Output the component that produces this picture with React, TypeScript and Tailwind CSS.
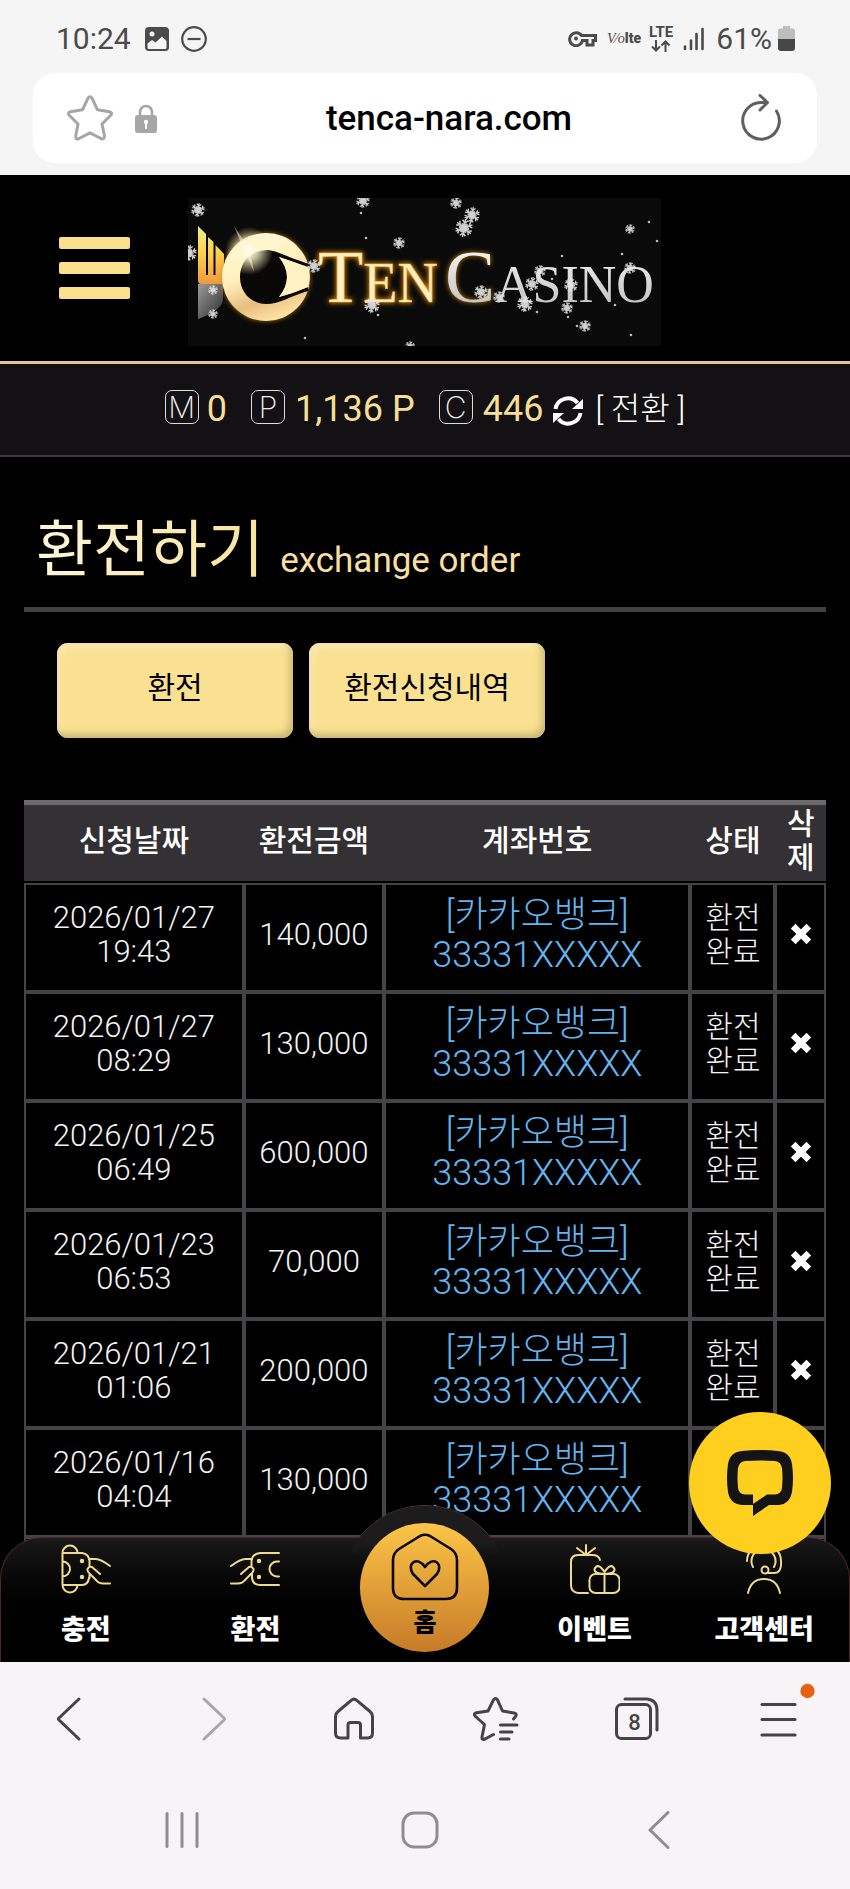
import type { ReactNode } from 'react';

const ORDERS = [
  { date: '2026/01/27', time: '19:43', amount: '140,000' },
  { date: '2026/01/27', time: '08:29', amount: '130,000' },
  { date: '2026/01/25', time: '06:49', amount: '600,000' },
  { date: '2026/01/23', time: '06:53', amount: '70,000' },
  { date: '2026/01/21', time: '01:06', amount: '200,000' },
  { date: '2026/01/16', time: '04:04', amount: '130,000' },
];

// x, y, radius
const FLAKES = [
  [198, 210, 7], [189, 253, 8], [363, 201, 7], [399, 243, 6], [314, 266, 7], [372, 305, 8],
  [213, 290, 5], [213, 314, 5], [456, 203, 6], [472, 215, 8], [464, 228, 9], [630, 229, 5],
  [481, 292, 7], [499, 297, 6], [540, 271, 6], [532, 284, 7], [525, 304, 8], [571, 285, 7],
  [567, 308, 6], [585, 326, 6], [630, 268, 6], [410, 346, 5],
];

const SPECKS = [
  [649, 222], [657, 241], [562, 256], [622, 254], [552, 279], [568, 317], [577, 326],
  [631, 335], [305, 338], [361, 213], [366, 238], [537, 312], [615, 305], [378, 315],
];

function Snowflake({ x, y, r }: { x: number; y: number; r: number }) {
  return (
    <g transform={`translate(${x} ${y}) scale(${r / 8})`} stroke="#e4e4e4" strokeWidth="1.3" opacity="0.9">
      <circle r="3" fill="#f4f4f4" stroke="none" />
      {[0, 60, 120, 180, 240, 300].map((a) => (
        <path key={a} transform={`rotate(${a + 10})`} d="M0 0V-8M-2.500 -7L0 -4.500L2.500 -7M-2 -4L0 -2L2 -4" fill="none" />
      ))}
    </g>
  );
}

function Logo() {
  return (
    <svg viewBox="188 198 473 148" className="mt-2 w-[473px]" role="img" aria-label="Ten Casino">
      <defs>
        <linearGradient id="wing" x1="0" y1="0" x2="0" y2="1">
          <stop offset="0" stopColor="#e8f08a" />
          <stop offset="0.45" stopColor="#ffd34d" />
          <stop offset="1" stopColor="#f09a3e" />
        </linearGradient>
        <linearGradient id="ring" x1="0.2" y1="0" x2="0.6" y2="1">
          <stop offset="0" stopColor="#fffbe0" />
          <stop offset="0.45" stopColor="#fff0bd" />
          <stop offset="0.75" stopColor="#e9bd80" />
          <stop offset="1" stopColor="#ffe6a6" />
        </linearGradient>
        <linearGradient id="stone" x1="0" y1="0" x2="1" y2="1">
          <stop offset="0" stopColor="#9c9c9c" />
          <stop offset="1" stopColor="#2c2c2c" />
        </linearGradient>
        <linearGradient id="silver" x1="0" y1="0" x2="0" y2="1">
          <stop offset="0" stopColor="#ffffff" />
          <stop offset="1" stopColor="#b9b9b9" />
        </linearGradient>
        <radialGradient id="flare">
          <stop offset="0" stopColor="#ffffff" />
          <stop offset="0.35" stopColor="#fff6cf" stopOpacity="0.8" />
          <stop offset="1" stopColor="#fff0b0" stopOpacity="0" />
        </radialGradient>
        <filter id="glow" x="-20%" y="-20%" width="140%" height="140%">
          <feGaussianBlur stdDeviation="2.5" />
        </filter>
      </defs>
      <rect x="188" y="198" width="473" height="148" fill="#0a0a0a" />
      <path d="M198 226L206 234V275H198ZM208 237L213.500 242V275H208ZM215.500 245L224 254V284H201Q198 284 198 280V275H215.500Z" fill="url(#wing)" />
      <path d="M198 284H223V300Q221 311 198 319Z" fill="url(#stone)" />
      <circle cx="266" cy="277" r="44" fill="#c98a1e" opacity="0.8" filter="url(#glow)" />
      <circle cx="266" cy="277" r="44" fill="url(#ring)" />
      <path d="M266 250C276 250 284 256 309 264V268Q294 262 279 257Q295 277 279 297Q294 293 308 287V291C290 296 280 304 266 304C251 304 240 292 240 277S251 250 266 250Z" fill="#0a0806" />
      <path d="M279 257Q294 262 308 267Q311 277 308 287Q294 293 279 297Q295 277 279 257Z" fill="#fff3c4" />
      <circle cx="249" cy="251" r="24" fill="url(#flare)" />
      <path d="M234 226L250 250L254 272L244 250ZM224 262L250 246L280 248L250 253Z" fill="#fff8d8" opacity="0.5" />
      <g fontFamily="'Liberation Serif', serif">
        <text x="318" y="302" fontSize="74" fill="#d98a10" stroke="#d98a10" strokeWidth="2" filter="url(#glow)">
          T<tspan fontSize="56">EN</tspan>
        </text>
        <text x="318" y="302" fontSize="74" fill="#fff0c4" stroke="#f3b455" strokeWidth="0.7">
          T<tspan fontSize="56">EN</tspan>
        </text>
        <text x="445" y="302" fontSize="75" fill="#d98a10" filter="url(#glow)">C</text>
        <text x="445" y="302" fontSize="75" fill="url(#silver)">C<tspan fontSize="52">ASINO</tspan></text>
      </g>
      {SPECKS.map(([x, y]) => (
        <circle key={`${x}-${y}`} cx={x} cy={y} r="1.300" fill="#b8b8b8" />
      ))}
      {FLAKES.map(([x, y, r]) => (
        <Snowflake key={`${x}-${y}`} x={x} y={y} r={r} />
      ))}
    </svg>
  );
}

function StatusBar() {
  return (
    <div className="flex h-[73px] items-center justify-between pt-1 pr-[55px] pl-14 text-[30px] text-[#4b4b4b]">
      <div className="flex items-center gap-3">
        <span className="mr-0.5">10:24</span>
        <svg viewBox="0 0 24 24" className="size-6">
          <rect width="24" height="24" rx="4" fill="#4b4b4b" />
          <circle cx="7" cy="7" r="2.500" fill="#f5f5f5" />
          <path d="M2.500 16.500L7 13L10.500 15.500L17 9.500L21.500 14V20.500Q21.500 22 20 22H4Q2.500 22 2.500 20.500Z" fill="#f5f5f5" />
        </svg>
        <svg viewBox="0 0 26 26" className="size-[26px]" fill="none" stroke="#4b4b4b" strokeWidth="2.200">
          <circle cx="13" cy="13" r="11.800" />
          <path d="M6.500 13H19.500" />
        </svg>
      </div>
      <div className="flex items-center">
        <svg viewBox="0 0 29 17" className="mr-2.5 w-[29px]" fill="none" stroke="#4b4b4b" strokeWidth="3">
          <path d="M13.500 5.500H27.500V10.500H25V15H19V10.500H14.500A6.500 6.500 0 1 1 13.500 5.500Z" />
          <circle cx="8" cy="8.500" r="2" fill="#4b4b4b" stroke="none" />
        </svg>
        <span className="mr-2 flex items-baseline text-[14px] leading-none">
          <i className="font-['Liberation_Serif',serif]">V⁄o</i>
          <b className="text-[14px] font-black">lte</b>
        </span>
        <span className="mr-2.5 flex flex-col items-center">
          <span className="text-[15px] leading-3 font-bold">LTE</span>
          <svg viewBox="0 0 20 12" className="mt-0.5 w-5" fill="none" stroke="#4b4b4b" strokeWidth="2">
            <path d="M5 0V10.500M1 6.500L5 10.500L9 6.500M14.500 12V1.500M10.500 5.500L14.500 1.500L18.500 5.500" />
          </svg>
        </span>
        <svg viewBox="0 0 21 24" className="mr-3 w-[21px]" stroke="#4b4b4b" strokeWidth="2.600" strokeLinecap="round">
          <path d="M2 19.500V22M8 13.500V22M13.500 7V22M19.500 2V22" />
        </svg>
        <span className="mr-1.5">61%</span>
        <svg viewBox="0 0 17 25" className="w-[17px]">
          <path d="M5 0H12V2.500H14.500Q17 2.500 17 5V13H0V5Q0 2.500 2.500 2.500H5Z" fill="#bdbdbd" />
          <path d="M0 13H17V22Q17 25 14 25H3Q0 25 0 22Z" fill="#474747" />
        </svg>
      </div>
    </div>
  );
}

function AddressBar() {
  return (
    <div className="mx-[33px] mb-3 flex h-[90px] items-center justify-between rounded-[22px] bg-white pr-[36px] pl-[34px]">
      <div className="flex w-[90px] items-center justify-between">
        <button type="button" aria-label="Bookmark">
          <svg viewBox="0 0 46 46" className="size-[46px]" fill="none" stroke="#a6a6a6" strokeWidth="3" strokeLinejoin="round">
            <path d="M20.800 3.500Q23 0 25.200 3.500L30.500 14.800L42.500 16.800Q46 17.800 43.500 20.500L35 29L37.500 41Q37.500 45 34 43.500L23 37.800L12 43.500Q8.500 45 8.700 41L11 29L2.500 20.500Q0 17.800 3.500 16.800L15.500 14.800Z" />
          </svg>
        </button>
        <svg viewBox="0 0 22 29" className="w-[22px]">
          <path d="M5 12V8A6 6 0 0 1 17 8V12" fill="none" stroke="#a6a6a6" strokeWidth="2.600" />
          <rect y="11" width="22" height="18" rx="3" fill="#a6a6a6" />
          <circle cx="11" cy="18" r="2.200" fill="#fff" />
          <rect x="10" y="18" width="2" height="7" fill="#fff" />
        </svg>
      </div>
      <span className="pt-0.5 text-[35px] font-medium text-black">tenca-nara.com</span>
      <button type="button" aria-label="Reload">
        <svg viewBox="0 0 40 48" className="w-10" fill="none" stroke="#5f5f5f" strokeWidth="3" strokeLinecap="round" strokeLinejoin="round">
          <path d="M35.500 17A18.300 18.300 0 1 1 20 8.500H26M19 1.500L26.500 8.500L19 16" />
        </svg>
      </button>
    </div>
  );
}

function Badge({ children }: { children: ReactNode }) {
  return (
    <span className="mb-1 flex size-[34px] items-center justify-center rounded-[7px] border border-[#dcdcdc] font-[Inter] text-[30px] leading-none font-extralight text-[#eeeeee]">
      {children}
    </span>
  );
}

function BalanceBar() {
  return (
    <div className="flex h-[93px] items-center justify-center border-b-2 border-[#3d3a3d] bg-[#131114] pb-0.5 text-[36px] text-[#f7df96]">
      <Badge>M</Badge>
      <span className="mr-6 ml-2">0</span>
      <Badge>P</Badge>
      <span className="mr-6 ml-2.5">1,136 P</span>
      <Badge>C</Badge>
      <span className="mr-2.5 ml-2.5">446</span>
      <button type="button" aria-label="Refresh" className="mt-1">
        <svg viewBox="0 0 30 30" className="size-[30px]" fill="none" stroke="#fff" strokeWidth="4">
          <path d="M2.500 13A12.500 12.500 0 0 1 24.500 7M27.500 17A12.500 12.500 0 0 1 5.500 23" />
          <path d="M30 3V13H19ZM0 27V17H11Z" fill="#fff" stroke="none" />
        </svg>
      </button>
      <button type="button" className="ml-3 text-[32px] font-light text-white">[ 전환 ]</button>
    </div>
  );
}

function OrderTable() {
  const cell = 'border-2 border-[#454346] p-0 pb-1.5';
  return (
    <table className="w-full table-fixed border-separate border-spacing-0 text-center text-[31px] leading-[34px] font-light text-[#f3f3f3]">
      <colgroup>
        <col className="w-[27.4%]" />
        <col className="w-[17.5%]" />
        <col className="w-[38.2%]" />
        <col className="w-[10.6%]" />
        <col className="w-[6.3%]" />
      </colgroup>
      <thead>
        <tr className="h-[83px] text-[30px]">
          {['신청날짜', '환전금액', '계좌번호', '상태', '삭제'].map((label) => (
            <th key={label} className="border-t-[5px] border-b-2 border-t-[#6b696c] border-b-black bg-[#343134] px-2 pt-0 pb-1 font-medium text-white">
              {label}
            </th>
          ))}
        </tr>
      </thead>
      <tbody>
        {ORDERS.map((o) => (
          <tr key={`${o.date} ${o.time}`} className="h-[109px]">
            <td className={cell}>
              {o.date}
              <br />
              {o.time}
            </td>
            <td className={cell}>{o.amount}</td>
            <td className={`${cell} text-[36px] leading-10 text-[#62b5f0]`}>
              [카카오뱅크]
              <br />
              33331XXXXX
            </td>
            <td className={`${cell} text-[30px]`}>
              환전
              <br />
              완료
            </td>
            <td className={cell}>
              <button type="button" aria-label="삭제">
                <svg viewBox="0 0 20 20" className="size-[22px]" stroke="#fff" strokeWidth="6" strokeLinecap="square">
                  <path d="M5 5L15 15M15 5L5 15" />
                </svg>
              </button>
            </td>
          </tr>
        ))}
        {/* next row, hidden behind the tab bar */}
        <tr className="h-[109px]">
          <td className={cell} />
          <td className={cell} />
          <td className={cell} />
          <td className={cell} />
          <td className={cell} />
        </tr>
      </tbody>
    </table>
  );
}

function TabItem({ label, children }: { label: string; children: ReactNode }) {
  return (
    <a href="#" className="flex flex-1 flex-col items-center pt-1.5 text-[27px] leading-8 font-black text-white">
      <svg viewBox="0 0 50 50" className="mb-5 size-[50px]" fill="none" stroke="#f0da8c" strokeWidth="2" strokeLinecap="round" strokeLinejoin="round">
        {children}
      </svg>
      {label}
    </a>
  );
}

function TabBar() {
  return (
    <nav className="absolute inset-x-0 bottom-0">
      <div className="absolute -top-8 left-1/2 size-[168px] -translate-x-1/2 rounded-full border border-[#542c2e] bg-[#1d1c1d]" />
      <div className="relative flex h-[125px] rounded-t-[42px] border border-b-0 border-[#4b2729] bg-linear-to-b from-[#1b1a1b] to-black to-80%">
        <TabItem label="충전">
          <path d="M1.500 9V41M1.500 9A7.500 7.500 0 0 1 16.500 9M1.500 41A7.500 7.500 0 0 0 16.500 41M1.500 9H21Q28 10 28.500 17V22M1.500 41H21Q27 41 28 34M1.500 17.500A7.500 7.500 0 0 1 1.500 32.500" />
          <path d="M28 15H34Q39 14.500 49 22M39 30L31 23Q28 22 26.500 25Q26 28 29 30L36 37Q38 39.500 42 39.500H49M28.500 30V34" />
          <circle cx="21" cy="17" r="1.200" fill="#f0da8c" />
          <circle cx="21" cy="33" r="1.200" fill="#f0da8c" />
        </TabItem>
        <TabItem label="환전">
          <path d="M49 9H30Q22 10 21.500 17V22M49 41H30Q23 41 22 34V30M49 17.500H47A7.500 7.500 0 0 0 47 32.500H49" />
          <path d="M22 15H16Q11 14.500 1 22M11 30L19 23Q22 22 23.500 25Q24 28 21 30L14 37Q12 39.500 8 39.500H1" />
          <circle cx="29" cy="17" r="1.200" fill="#f0da8c" />
          <circle cx="29" cy="33" r="1.200" fill="#f0da8c" />
        </TabItem>
        <div className="relative flex flex-1 justify-center">
          <div className="absolute -top-8 size-[166px] rounded-full bg-linear-to-b from-[#1d1c1d] from-20% to-transparent to-30%" />
          <a href="#" className="relative -mt-[15px] flex size-[129px] flex-col items-center rounded-full bg-linear-to-b from-[#fcc548] to-[#c67b28] pt-2.5 text-[25px] leading-8 font-black text-black">
            <svg viewBox="0 0 68 68" className="mb-1.5 w-[68px]" fill="none" stroke="#0c0703" strokeWidth="2.600" strokeLinejoin="round">
              <path d="M29 3Q34 .5 39 3L60 16Q66 20 66 27V55Q66 66 55 66H13Q2 66 2 55V27Q2 20 8 16Z" />
              <path d="M34 53L22 41C15 31 26 22 34 34C42 22 53 31 46 41Z" />
            </svg>
            홈
          </a>
        </div>
        <TabItem label="이벤트">
          <path d="M18 49H8Q1 48 1 41V18Q1 11 8 11H22Q29 11 30 16M16 1V10M7 4L16 11L25 4" />
          <rect x="19.500" y="30" width="30" height="19" rx="6" />
          <path d="M34.500 49V30M34.500 30Q24 30 24.500 25Q28 18 34.500 28Q41 18 44.500 25Q45 30 34.500 30" />
        </TabItem>
        <TabItem label="고객센터">
          <path d="M8 17A17 17 0 0 1 42 17Q43 29 35 29H29M14 23A12 12 0 1 1 35 23" />
          <circle cx="26" cy="26" r="3.500" />
          <path d="M9 49Q12 35 25 35T41 49" />
        </TabItem>
      </div>
    </nav>
  );
}

function BrowserNav() {
  const item = 'relative flex items-center justify-center';
  return (
    <div className="bg-[#f6f4f7]">
      <div className="grid h-[116px] grid-cols-6 items-center pb-0.5">
        <button type="button" aria-label="Back" className={item}>
          <svg viewBox="0 0 46 46" className="size-[46px]" fill="none" stroke="#454346" strokeWidth="3" strokeLinecap="round" strokeLinejoin="round">
            <path d="M31 3L11 22Q10 23 11 24L31 43" />
          </svg>
        </button>
        <button type="button" aria-label="Forward" className={item}>
          <svg viewBox="0 0 46 46" className="size-[46px]" fill="none" stroke="#a8a6a9" strokeWidth="3" strokeLinecap="round" strokeLinejoin="round">
            <path d="M15 3L35 22Q36 23 35 24L15 43" />
          </svg>
        </button>
        <button type="button" aria-label="Home" className={item}>
          <svg viewBox="0 0 46 46" className="size-[46px]" fill="none" stroke="#454346" strokeWidth="3" strokeLinejoin="round">
            <path d="M20.500 4.200Q23 2 25.500 4.200L39 15.500Q41.500 17.500 41.500 20.500V37Q41.500 42 36.500 42H29.500V29Q29.500 26.500 27 26.500H19.500Q17 26.500 17 29V42H9.500Q4.500 42 4.500 37V20.500Q4.500 17.500 7 15.500Z" />
          </svg>
        </button>
        <button type="button" aria-label="Bookmarks" className={item}>
          <svg viewBox="0 0 46 46" className="size-[46px]" fill="none" stroke="#454346" strokeWidth="3" strokeLinecap="round" strokeLinejoin="round">
            <path d="M20.500 38.500L12 43Q8.500 44.500 9 41L11.500 28.500L2.500 20.500Q0 17.500 3.500 16.800L15 15L20.500 3.800Q22.500 1 24.500 3.800L29.500 15L41 17Q44.500 17.800 42.500 20.500L40.500 23M27.500 29H44M27.500 36H39M27.500 43H36" />
          </svg>
        </button>
        <button type="button" aria-label="Tabs" className={`${item} text-[22px] font-medium text-[#454346]`}>
          <svg viewBox="0 0 46 46" className="size-[46px]" fill="none" stroke="#454346" strokeWidth="3" strokeLinecap="round">
            <rect x="2.500" y="8.500" width="34" height="34" rx="5" />
            <path d="M11 3H33Q43 4 43 14V34" />
          </svg>
          <span className="absolute mt-1.5 mr-1.5">8</span>
        </button>
        <button type="button" aria-label="Menu" className={item}>
          <svg viewBox="0 0 46 46" className="size-[46px] overflow-visible" fill="none" stroke="#454346" strokeWidth="3.200" strokeLinecap="round">
            <path d="M6 8.500H39M6 23.500H39M6 39H39" />
            <circle cx="51.500" cy="-5" r="7.200" fill="#ea6012" stroke="none" />
          </svg>
        </button>
      </div>
      <div className="grid h-[111px] grid-cols-3 items-center pr-[72px] pb-2 pl-[63px]">
        <button type="button" aria-label="Recents" className={item}>
          <svg viewBox="0 0 38 38" className="size-[38px]" fill="none" stroke="#8f8d90" strokeWidth="3" strokeLinecap="round">
            <path d="M4 2.500V35.500M19 2.500V35.500M34 2.500V35.500" />
          </svg>
        </button>
        <button type="button" aria-label="Home screen" className={item}>
          <svg viewBox="0 0 38 38" className="size-[38px]" fill="none" stroke="#8f8d90" strokeWidth="3">
            <rect x="2" y="2" width="34" height="34" rx="11" />
          </svg>
        </button>
        <button type="button" aria-label="System back" className={item}>
          <svg viewBox="0 0 38 38" className="size-[38px]" fill="none" stroke="#8f8d90" strokeWidth="3" strokeLinecap="round" strokeLinejoin="round">
            <path d="M28 1.500L10 19L28 36.500" />
          </svg>
        </button>
      </div>
    </div>
  );
}

const BUTTON =
  'flex h-[95px] w-[236px] items-center justify-center rounded-[11px] bg-[#f9e191] pb-1.5 text-[30px] text-black shadow-[inset_-3px_-4px_7px_#c9b375,inset_3px_4px_7px_#fdeab8]';

export default function App() {
  return (
    <div className="flex h-screen min-h-[900px] flex-col bg-black font-[Roboto,'Noto_Sans_CJK_KR',sans-serif]">
      <div className="bg-[#f5f5f5]">
        <StatusBar />
        <AddressBar />
      </div>

      <div className="relative min-h-0 flex-1 overflow-hidden bg-black">
        <header className="flex h-[189px] items-center border-b-[3px] border-[#e2c895] pl-[59px]">
          <button type="button" aria-label="Menu" className="mr-[58px] flex w-[71px] shrink-0 flex-col gap-[13px]">
            <span className="h-3 rounded-xs bg-[#fbe08c]" />
            <span className="h-3 rounded-xs bg-[#fbe08c]" />
            <span className="h-3 rounded-xs bg-[#fbe08c]" />
          </button>
          <Logo />
        </header>
        <BalanceBar />

        <main className="px-6">
          <div className="flex h-[155px] items-baseline gap-4 border-b-[5px] border-[#434143] pt-[52px] pl-3">
            <h1 className="bg-linear-to-r from-[#fdf6da] to-[#fae29a] bg-clip-text text-[62px] leading-[84px] text-transparent">환전하기</h1>
            <span className="text-[35px] text-[#f7dfa0]">exchange order</span>
          </div>
          <div className="flex gap-4 px-[33px] pt-[31px] pb-[62px]">
            <button type="button" className={BUTTON}>환전</button>
            <button type="button" className={BUTTON}>환전신청내역</button>
          </div>
          <OrderTable />
        </main>

        <TabBar />
        <button type="button" aria-label="Chat" className="absolute right-[19px] bottom-[108px] flex size-[142px] items-center justify-center rounded-full bg-[#fecf1e]">
          <svg viewBox="0 0 66 66" className="w-[66px]">
            <path
              fillRule="evenodd"
              fill="#141414"
              d="M15 1Q33 -1 51 1Q63 2 65 14Q67 28 65 42Q63 54 52 55H42L26 66V55H15Q3 54 1 42Q-1 28 1 14Q3 2 15 1ZM18 11Q12 12 11 18Q10 28 11 38Q12 44 18 44.500H26V54L40 44.500H48Q54 44 55 38Q56 28 55 18Q54 12 48 11Q33 10 18 11Z"
            />
          </svg>
        </button>
      </div>

      <BrowserNav />
    </div>
  );
}
